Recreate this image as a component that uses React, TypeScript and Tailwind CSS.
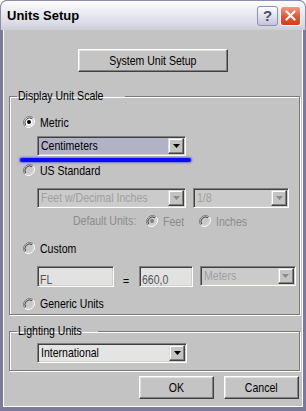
import type { ReactNode } from 'react';

const font = "font-['Liberation_Sans',Arial,sans-serif]";

// condensed system-dialog look: Arial squeezed horizontally
function Txt({ children, className, center }: { children: ReactNode; className?: string; center?: boolean }) {
  return (
    <span
      className={`inline-block whitespace-nowrap leading-none ${center ? 'origin-center' : 'origin-left'} scale-x-[0.81] ${className ?? ''}`}
    >
      {children}
    </span>
  );
}

function Radio({ checked, disabled }: { checked?: boolean; disabled?: boolean }) {
  return (
    <svg width="12" height="12" viewBox="0 0 12 12" className="shrink-0">
      <path d="M10.2 1.8 A6 6 0 0 0 1.8 10.2" fill="none" stroke="#808080" strokeWidth="1" />
      <path d="M1.8 10.2 A6 6 0 0 0 10.2 1.8" fill="none" stroke="#ffffff" strokeWidth="1" />
      <circle cx="6" cy="6" r="4.5" fill={disabled ? '#c8c8c8' : '#ffffff'} />
      <path d="M9.2 2.8 A4.6 4.6 0 0 0 2.8 9.2" fill="none" stroke="#404040" strokeWidth="1" />
      <path d="M2.8 9.2 A4.6 4.6 0 0 0 9.2 2.8" fill="none" stroke="#d8d8d8" strokeWidth="1" />
      {checked && <circle cx="6" cy="6" r="2" fill={disabled ? '#808080' : '#000000'} />}
    </svg>
  );
}

function RadioRow({ label, checked, disabled, dim }: { label: string; checked?: boolean; disabled?: boolean; dim?: boolean }) {
  return (
    <div className="flex h-[14px] items-center gap-[5px]">
      <Radio checked={checked} disabled={disabled} />
      <Txt className={dim ? 'text-[#8c8c8c]' : 'text-black'}>{label}</Txt>
    </div>
  );
}

function Combo({ value, width, bg, disabled }: { value: string; width: string; bg: string; disabled?: boolean }) {
  return (
    <div
      className={`flex h-[20px] items-center border border-t-[#808080] border-l-[#808080] border-r-white border-b-white shadow-[inset_1px_1px_0_#404040,inset_-1px_-1px_0_#d4d0c8] ${width} ${bg}`}
    >
      <div className="flex-1 overflow-hidden pl-[3px]">
        <Txt className={disabled ? 'text-[#a0a0a0]' : 'text-black'}>{value}</Txt>
      </div>
      <div className="mr-[1px] flex h-[16px] w-[16px] items-center justify-center border border-t-[#dcdcdc] border-l-[#dcdcdc] border-r-[#404040] border-b-[#404040] bg-[#c4c4c4] shadow-[inset_-1px_-1px_0_#808080,inset_1px_1px_0_#ffffff]">
        <svg width="7" height="4" viewBox="0 0 7 4">
          <path d="M0 0 H7 L3.5 4 Z" fill={disabled ? '#8a8a8a' : '#000000'} />
        </svg>
      </div>
    </div>
  );
}

function Field({ value, width }: { value: string; width: string }) {
  return (
    <div
      className={`flex h-[21px] items-start border border-t-[#808080] border-l-[#808080] border-r-white border-b-white bg-[#e2e2e2] shadow-[inset_1px_1px_0_#404040,inset_-1px_-1px_0_#d4d0c8] ${width}`}
    >
      <div className="pl-[2px] pt-[3px]">
        <Txt className="text-[#555555]">{value}</Txt>
      </div>
    </div>
  );
}

function Button({ children, width }: { children: ReactNode; width: string }) {
  return (
    <button
      className={`flex h-[23px] items-center justify-center border border-t-white border-l-white border-r-[#404040] border-b-[#404040] bg-[#c4c4c4] text-black shadow-[inset_-1px_-1px_0_#808080,inset_1px_1px_0_#e0e0e0] ${width}`}
    >
      <Txt center>{children}</Txt>
    </button>
  );
}

function Group({ label, children, className }: { label: string; children: ReactNode; className?: string }) {
  return (
    <fieldset className={`ml-[5px] w-[291px] border border-[#7a7a7a] shadow-[inset_1px_1px_0_#ffffff,1px_1px_0_#ffffff] ${className ?? ''}`}>
      <legend className="ml-[7px] h-[14px] px-[1px] leading-[14px] text-black">
        <Txt>{label}</Txt>
      </legend>
      {children}
    </fieldset>
  );
}

export default function App() {
  return (
    <div className={`relative h-[411px] w-[306px] overflow-hidden rounded-t-[7px] bg-[#7b7a9a] ${font} text-[13px]`}>
      {/* Title bar */}
      <div className="flex h-[30px] items-center rounded-t-[7px] border border-b-0 border-[#8e8dab] bg-[linear-gradient(#fdfdfe,#ececf2_35%,#dcdce6_75%,#cdcdda)] pl-[6px] pr-[4px]">
        <span className="flex-1 text-[13px] font-bold leading-none text-black">Units Setup</span>
        <div className="flex gap-[2px]">
          <div className="flex h-[20px] w-[21px] items-center justify-center rounded-[3px] border border-[#8f8fae] bg-[linear-gradient(#fdfdff,#dcdcea_60%,#c4c4d8)] text-[15px] font-bold leading-none text-[#4d4d6e]">
            ?
          </div>
          <div className="flex h-[20px] w-[21px] items-center justify-center rounded-[3px] border border-white bg-[linear-gradient(#f49a80,#e2552f_55%,#cf3f1c)]">
            <svg width="11" height="11" viewBox="0 0 11 11">
              <path d="M1.5 1.5 L9.5 9.5 M9.5 1.5 L1.5 9.5" stroke="#ffffff" strokeWidth="2.2" strokeLinecap="round" />
            </svg>
          </div>
        </div>
      </div>

      {/* Body */}
      <div className="mx-[3px] flex h-[377px] flex-col border-x border-b border-white bg-[#c3c3c3]">
        <div className="mt-[19px] flex justify-center">
          <Button width="w-[150px]">System Unit Setup</Button>
        </div>

        <Group label="Display Unit Scale" className="mt-[17px] h-[226px]">
          <div className="flex flex-col pl-[13px]">
            <div className="mt-[12px]">
              <RadioRow label="Metric" checked />
            </div>
            <div className="ml-[14px] mt-[7px]">
              <Combo value="Centimeters" width="w-[149px]" bg="bg-[#b1b2c6]" />
            </div>
            <div className="mt-[7px]">
              <RadioRow label="US Standard" disabled />
            </div>
            <div className="ml-[14px] mt-[11px] flex gap-[7px]">
              <Combo value="Feet w/Decimal Inches" width="w-[149px]" bg="bg-[#cbcbcb]" disabled />
              <Combo value="1/8" width="w-[96px]" bg="bg-[#cbcbcb]" disabled />
            </div>
            <div className="ml-[50px] mt-[6px] flex h-[14px] items-center">
              <div className="w-[73px]">
                <Txt className="text-[#8c8c8c]">Default Units:</Txt>
              </div>
              <div className="w-[53px]">
                <RadioRow label="Feet" checked disabled dim />
              </div>
              <RadioRow label="Inches" disabled dim />
            </div>
            <div className="mt-[13px]">
              <RadioRow label="Custom" disabled />
            </div>
            <div className="ml-[14px] mt-[11px] flex items-start">
              <Field value="FL" width="w-[77px]" />
              <div className="ml-[9px] mr-[8px] pt-[5px]">
                <Txt>=</Txt>
              </div>
              <Field value="660,0" width="w-[54px]" />
              <div className="ml-[7px]">
                <Combo value="Meters" width="w-[96px]" bg="bg-[#cbcbcb]" disabled />
              </div>
            </div>
            <div className="mt-[6px]">
              <RadioRow label="Generic Units" disabled />
            </div>
          </div>
        </Group>

        <Group label="Lighting Units" className="mt-[9px] h-[47px]">
          <div className="ml-[27px] mt-[5px]">
            <Combo value="International" width="w-[150px]" bg="bg-[#e4e4e4]" />
          </div>
        </Group>

        <div className="mr-[3px] mt-[5px] flex justify-end gap-[10px]">
          <Button width="w-[75px]">OK</Button>
          <Button width="w-[75px]">Cancel</Button>
        </div>
      </div>

      {/* Blue annotation stroke */}
      <div className="absolute left-[20px] top-[158px] h-[4px] w-[171px] rounded-full bg-[#0a0aff] shadow-[0_0_2px_1px_rgba(40,40,255,0.55)]" />
    </div>
  );
}
